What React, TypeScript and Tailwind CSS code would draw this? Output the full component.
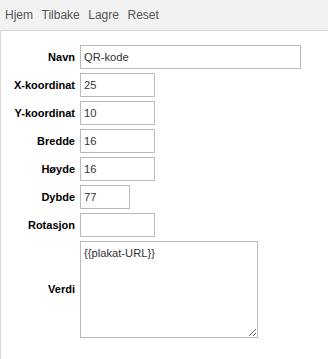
import React from "react";

const rows: { label: string; value: string; w: string }[] = [
  { label: "Navn", value: "QR-kode", w: "w-[221px]" },
  { label: "X-koordinat", value: "25", w: "w-[75px]" },
  { label: "Y-koordinat", value: "10", w: "w-[75px]" },
  { label: "Bredde", value: "16", w: "w-[75px]" },
  { label: "Høyde", value: "16", w: "w-[75px]" },
  { label: "Dybde", value: "77", w: "w-[50px]" },
  { label: "Rotasjon", value: "", w: "w-[75px]" },
];

export default function App() {
  return (
    <div className="w-[328px] h-[359px] bg-white font-['Liberation_Sans',Arial,sans-serif] overflow-hidden">
      <div className="h-[30px] bg-[#f2f2f2] flex items-center pl-[5px] gap-[8.5px] text-[12px] text-[#555]">
        <span>Hjem</span>
        <span>Tilbake</span>
        <span>Lagre</span>
        <span>Reset</span>
      </div>
      <div className="border-t border-l border-[#dadada] h-[329px] pt-[14px]">
        <div className="grid grid-cols-[74px_1fr] gap-x-[5px] gap-y-[4px] items-center">
          {rows.map((r) => (
            <React.Fragment key={r.label}>
              <div className="text-right font-bold text-[11px] text-black">{r.label}</div>
              <input
                readOnly
                defaultValue={r.value}
                className={`${r.w} h-[24px] border border-[#bbbbbb] bg-white px-[3px] text-[11.2px] text-[#333] outline-none`}
              />
            </React.Fragment>
          ))}
          <div className="text-right font-bold text-[11px] text-black">Verdi</div>
          <textarea
            readOnly
            defaultValue="{{plakat-URL}}"
            className="w-[178px] h-[97px] border border-[#bbbbbb] bg-white px-[3px] py-[3px] text-[11.2px] text-[#333] outline-none resize"
          />
        </div>
      </div>
    </div>
  );
}
